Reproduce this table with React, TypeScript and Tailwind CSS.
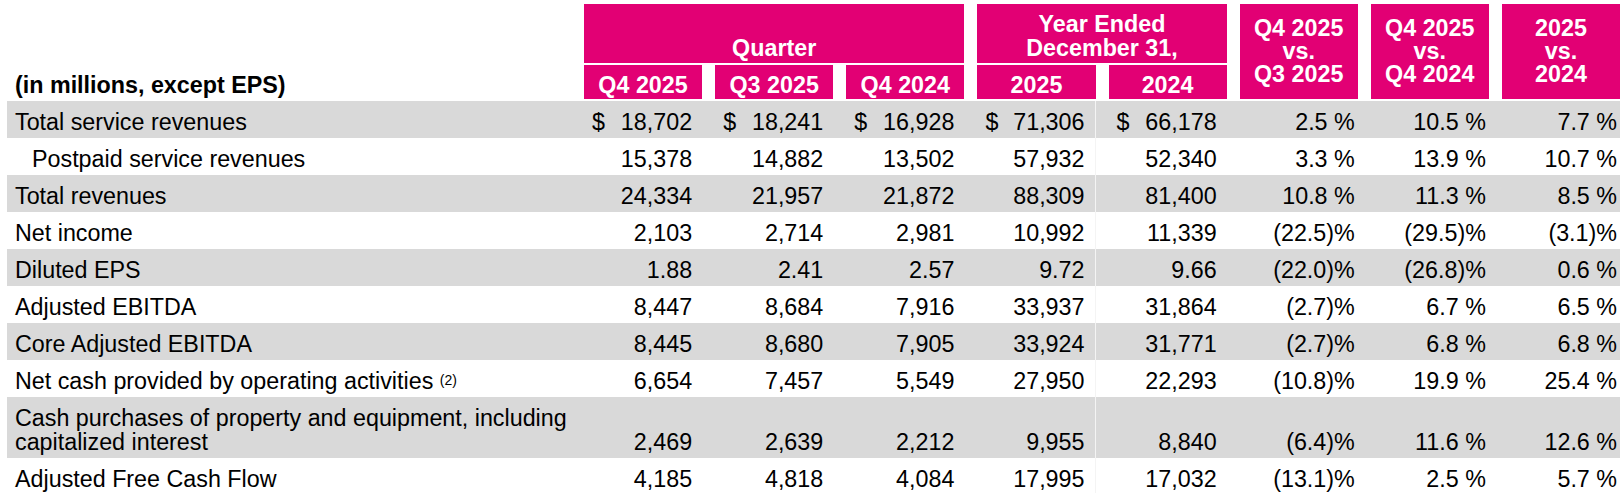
type Row = {
  label: React.ReactNode
  vals: string[]
  pcts: string[]
  gray?: boolean
  dollar?: boolean
  indent?: boolean
  tall?: boolean
}

const rows: Row[] = [
  {
    label: 'Total service revenues',
    vals: ['18,702', '18,241', '16,928', '71,306', '66,178'],
    pcts: ['2.5 %', '10.5 %', '7.7 %'],
    gray: true,
    dollar: true,
  },
  {
    label: 'Postpaid service revenues',
    vals: ['15,378', '14,882', '13,502', '57,932', '52,340'],
    pcts: ['3.3 %', '13.9 %', '10.7 %'],
    indent: true,
  },
  {
    label: 'Total revenues',
    vals: ['24,334', '21,957', '21,872', '88,309', '81,400'],
    pcts: ['10.8 %', '11.3 %', '8.5 %'],
    gray: true,
  },
  {
    label: 'Net income',
    vals: ['2,103', '2,714', '2,981', '10,992', '11,339'],
    pcts: ['(22.5)%', '(29.5)%', '(3.1)%'],
  },
  {
    label: 'Diluted EPS',
    vals: ['1.88', '2.41', '2.57', '9.72', '9.66'],
    pcts: ['(22.0)%', '(26.8)%', '0.6 %'],
    gray: true,
  },
  {
    label: 'Adjusted EBITDA',
    vals: ['8,447', '8,684', '7,916', '33,937', '31,864'],
    pcts: ['(2.7)%', '6.7 %', '6.5 %'],
  },
  {
    label: 'Core Adjusted EBITDA',
    vals: ['8,445', '8,680', '7,905', '33,924', '31,771'],
    pcts: ['(2.7)%', '6.8 %', '6.8 %'],
    gray: true,
  },
  {
    label: (
      <>
        Net cash provided by operating activities{' '}
        <span className="text-[14px] align-[4px]">(2)</span>
      </>
    ),
    vals: ['6,654', '7,457', '5,549', '27,950', '22,293'],
    pcts: ['(10.8)%', '19.9 %', '25.4 %'],
  },
  {
    label: (
      <>
        Cash purchases of property and equipment, including
        <br />
        capitalized interest
      </>
    ),
    vals: ['2,469', '2,639', '2,212', '9,955', '8,840'],
    pcts: ['(6.4)%', '11.6 %', '12.6 %'],
    gray: true,
    tall: true,
  },
  {
    label: 'Adjusted Free Cash Flow',
    vals: ['4,185', '4,818', '4,084', '17,995', '17,032'],
    pcts: ['(13.1)%', '2.5 %', '5.7 %'],
  },
]

const head = 'bg-[#e20074] text-white font-bold flex justify-center text-center'

export default function App() {
  return (
    <div className="w-[1624px] h-[493px] overflow-hidden bg-white pt-[4px] pl-[7px] text-black text-[23.3px] font-['Liberation_Sans',Arial,sans-serif]">
      {/* header */}
      <div className="grid grid-cols-[564px_repeat(8,118.125px)] grid-rows-[59px_34px] gap-x-[13px] gap-y-[2px]">
        <div className="row-span-2 flex items-end pb-[2px] pl-2 font-bold leading-[24px] whitespace-nowrap">
          (in millions, except EPS)
        </div>
        <div className={`${head} col-span-3 items-end pb-[3px] leading-[24px]`}>Quarter</div>
        <div className={`${head} col-span-2 items-end pb-[3px] leading-[24px]`}>
          Year Ended
          <br />
          December 31,
        </div>
        <div className={`${head} row-span-2 items-center leading-[23px]`}>
          Q4 2025
          <br />
          vs.
          <br />
          Q3 2025
        </div>
        <div className={`${head} row-span-2 items-center leading-[23px]`}>
          Q4 2025
          <br />
          vs.
          <br />
          Q4 2024
        </div>
        <div className={`${head} row-span-2 items-center leading-[23px]`}>
          2025
          <br />
          vs.
          <br />
          2024
        </div>
        {['Q4 2025', 'Q3 2025', 'Q4 2024', '2025', '2024'].map((h) => (
          <div key={h} className={`${head} items-end pb-[2px] leading-[24px]`}>
            {h}
          </div>
        ))}
      </div>

      {/* body */}
      <div className="mt-[2px] w-[1613px]">
        {rows.map((r, i) => (
          <div
            key={i}
            className={`grid grid-cols-[564px_repeat(8,118.125px)] gap-x-[13px] leading-[24px] ${
              r.tall ? 'h-[61px]' : 'h-[37px]'
            } ${r.gray ? 'bg-[#d9d9d9]' : 'bg-white'}`}
          >
            <div
              className={`flex items-end pb-[4px] whitespace-nowrap ${r.indent ? 'pl-[25px]' : 'pl-2'}`}
            >
              <div>{r.label}</div>
            </div>
            {r.vals.map((v, j) => (
              <div
                key={j}
                className={`flex items-end pb-[4px] pl-2 pr-[10px] ${
                  r.dollar ? 'justify-between' : 'justify-end'
                } ${j === 3 ? 'border-r border-[#f4f4f4]' : ''}`}
              >
                {r.dollar && <span>$</span>}
                <span>{v}</span>
              </div>
            ))}
            {r.pcts.map((p, j) => (
              <div key={j} className="flex items-end justify-end pb-[4px] pr-[3px] whitespace-pre">
                {p}
              </div>
            ))}
          </div>
        ))}
      </div>
    </div>
  )
}
